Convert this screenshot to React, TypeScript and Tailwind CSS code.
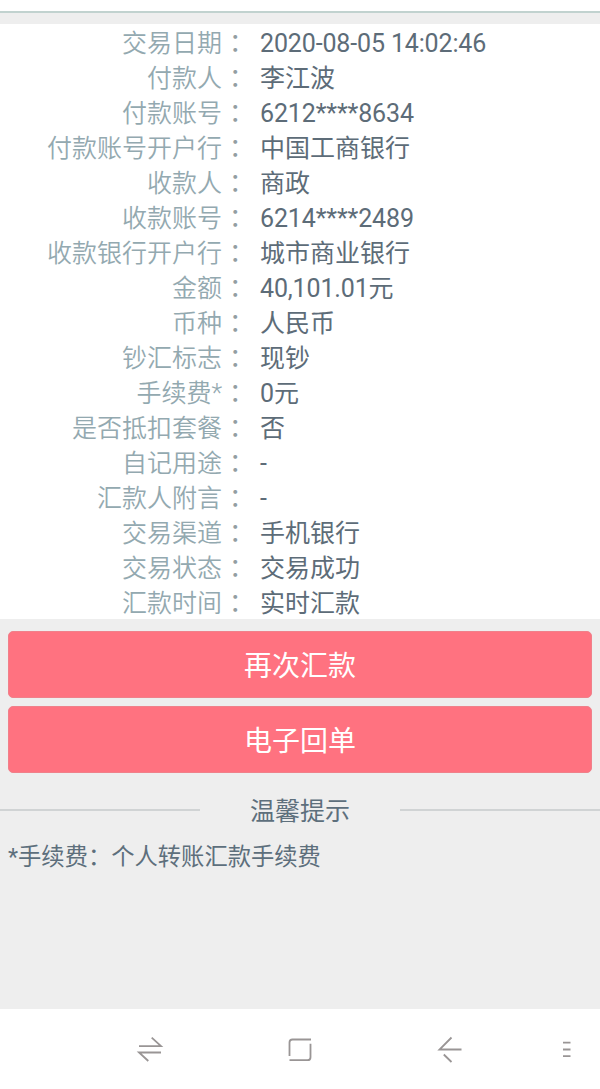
import React from "react";

const details = [
  { label: "交易日期", value: "2020-08-05 14:02:46" },
  { label: "付款人", value: "李江波" },
  { label: "付款账号", value: "6212****8634" },
  { label: "付款账号开户行", value: "中国工商银行" },
  { label: "收款人", value: "商政" },
  { label: "收款账号", value: "6214****2489" },
  { label: "收款银行开户行", value: "城市商业银行" },
  { label: "金额", value: "40,101.01元" },
  { label: "币种", value: "人民币" },
  { label: "钞汇标志", value: "现钞" },
  { label: "手续费*", value: "0元" },
  { label: "是否抵扣套餐", value: "否" },
  { label: "自记用途", value: "-" },
  { label: "汇款人附言", value: "-" },
  { label: "交易渠道", value: "手机银行" },
  { label: "交易状态", value: "交易成功" },
  { label: "汇款时间", value: "实时汇款" },
];

const actions = ["再次汇款", "电子回单"];

function DetailRow({ label, value }: { label: string; value: string }) {
  // digits run slightly tighter than the Chinese text
  const numeric = /^\d{2}/.test(value);

  return (
    <div className="flex h-[35px] whitespace-nowrap pt-0.5 text-[25px] leading-[35px]">
      <dt className="w-[222px] text-right font-[350] text-[#93a9b0]">{label}</dt>
      <span className="-mt-px w-[38px] pl-[7px] text-[#929ea2]">：</span>
      <dd className={numeric ? "tracking-[-0.14px] text-[#5d6c78]" : "text-[#5d6c78]"}>
        {value}
      </dd>
    </div>
  );
}

function NavBar() {
  return (
    <nav className="h-20 bg-white">
      <svg
        width="600"
        height="80"
        viewBox="0 1009 600 80"
        fill="none"
        stroke="#999595"
        strokeWidth="1.8"
      >
        <path d="M139 1046.2h22l-9.300-8.500M161 1052.500H139l9.300 8.500" />
        <path d="M311 1039.500h-18.500q-3 0-3 3v13.500M289.500 1060.200h18q3 0 3-3v-13.500" />
        <path d="M461.500 1049.500H439.500l12-12M443.800 1054.500l7.700 7.500" />
        <path d="M563 1042.700h7.500M563 1049.500h7.500M563 1056.200h7.500" />
      </svg>
    </nav>
  );
}

export default function App() {
  return (
    <div className="flex h-[1089px] w-[600px] flex-col overflow-hidden bg-[#eeeeee] font-[Roboto,'Noto_Sans_CJK_SC',sans-serif]">
      <header className="h-[13px] shrink-0 border-b-2 border-[#c1d2cf] bg-white" />
      <main className="flex-1">
        <dl className="mt-[11px] bg-white">
          {details.map((item) => (
            <DetailRow key={item.label} label={item.label} value={item.value} />
          ))}
        </dl>
        <div className="flex flex-col gap-2 px-2 pt-3">
          {actions.map((text) => (
            <button
              key={text}
              className="h-[67px] rounded-[5px] border border-[#f0808a] bg-[#ff7280] pt-1 text-[28px] text-white"
            >
              {text}
            </button>
          ))}
        </div>
        <div className="mt-[19px] flex h-9 items-center justify-between">
          <span className="h-0.5 w-[200px] bg-[#d0d3d4]" />
          <h2 className="pt-1 text-[25px] leading-9 text-[#5d6f7c]">温馨提示</h2>
          <span className="h-0.5 w-[200px] bg-[#d0d3d4]" />
        </div>
        <p className="mt-[13px] pl-2 text-[23.300px] leading-8 text-[#5d6f7c]">
          *手续费：个人转账汇款手续费
        </p>
      </main>
      <NavBar />
    </div>
  );
}
